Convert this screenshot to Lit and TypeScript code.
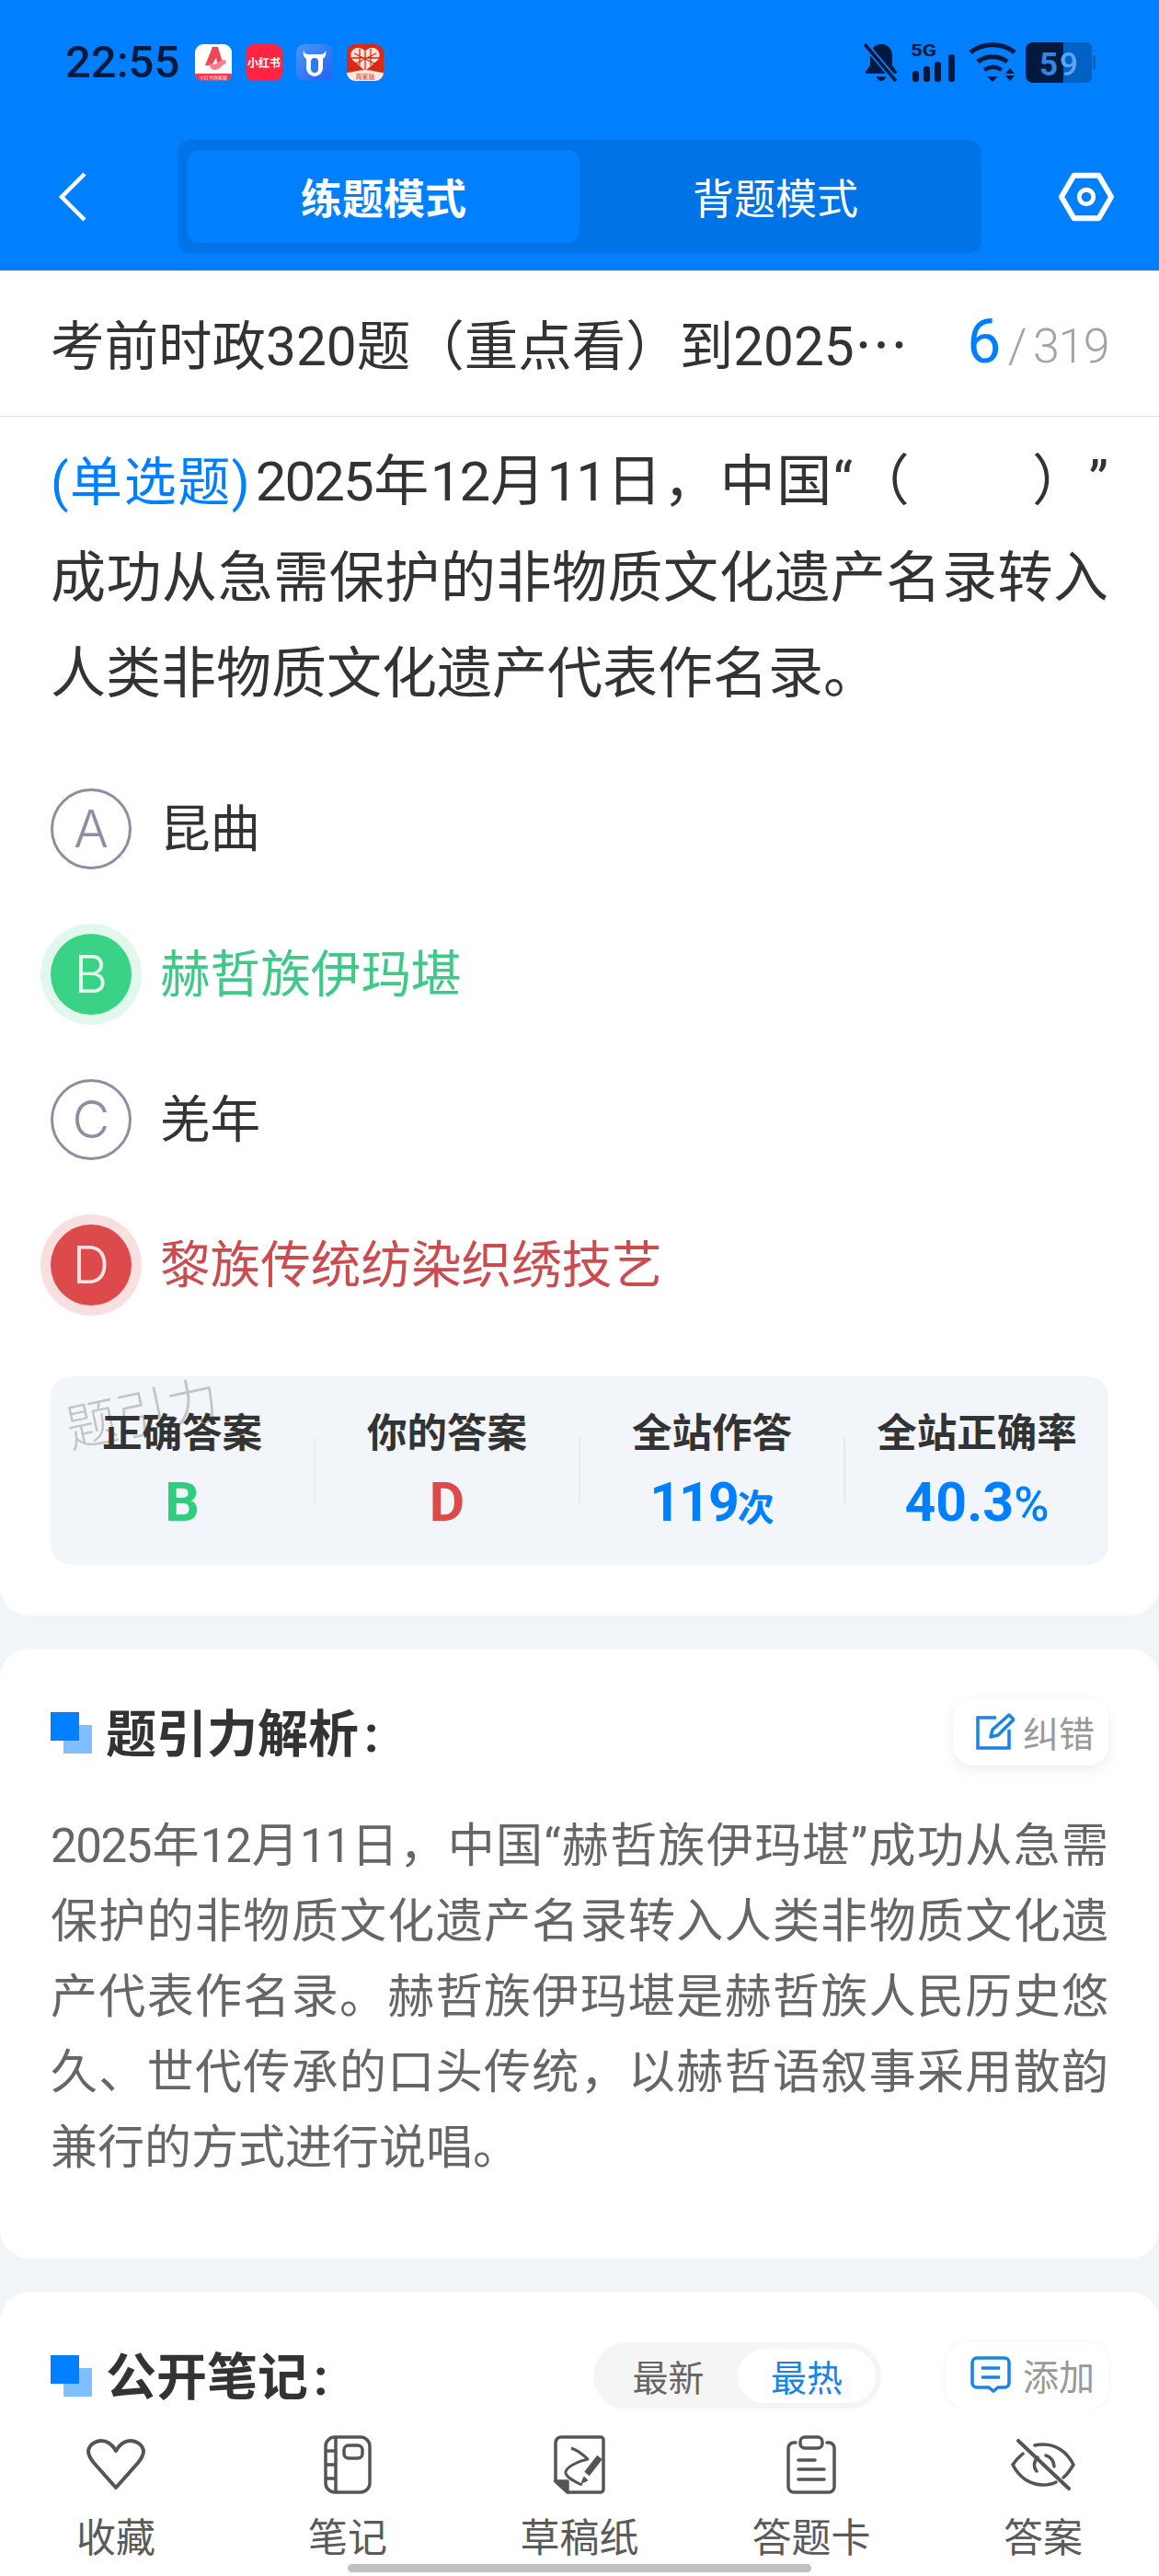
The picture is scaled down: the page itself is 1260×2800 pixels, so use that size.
import { LitElement, css, html, svg } from 'lit';
import { customElement } from 'lit/decorators.js';

const options = [
  { key: 'A', text: '昆曲', state: '' },
  { key: 'B', text: '赫哲族伊玛堪', state: 'right' },
  { key: 'C', text: '羌年', state: '' },
  { key: 'D', text: '黎族传统纺染织绣技艺', state: 'wrong' },
];

const tabIcons = {
  heart: html`<svg width="64" height="56" viewBox="0 0 64 56" fill="none" stroke="#555" stroke-width="4" stroke-linejoin="round"><path d="M32 53 8 26C3 20 2 16 2 13 3 6 10 2 16 2c7 0 12 4 16 11C36 6 41 2 48 2c6 0 13 4 14 11 0 3-1 7-6 13z"/></svg>`,
  note: html`<svg width="52" height="64" viewBox="0 0 52 64" fill="none" stroke="#555" stroke-width="3.5"><rect x="2" y="2" width="48" height="60" rx="10"/><path d="M13 2v60M2 17h11M2 32h11M2 47h11"/><rect x="22" y="11" width="20" height="14" rx="5"/></svg>`,
  draft: html`<svg width="56" height="64" viewBox="0 0 56 64" fill="none" stroke="#555" stroke-width="3.5" stroke-linejoin="round"><path d="M8 2h43a3 3 0 0 1 3 3v54a3 3 0 0 1-3 3H15L2 50V8a6 6 0 0 1 6-6z"/><path d="M2 50h13v12z" fill="#555"/><path d="M19 14c8 3 14 8 18 12-10 2-25 9-24 15 1 5 9 9 18 13" stroke-width="3"/><path d="M50 24 36 42" stroke-width="7"/><path d="M33 46l-2 5 5-2z" fill="#555" stroke-width="2"/></svg>`,
  card: html`<svg width="54" height="64" viewBox="0 0 54 64" fill="none" stroke="#555" stroke-width="3.5" stroke-linecap="round"><path d="M10 8H8a6 6 0 0 0-6 6v42a6 6 0 0 0 6 6h38a6 6 0 0 0 6-6V14a6 6 0 0 0-6-6h-2"/><rect x="15" y="2" width="24" height="12" rx="5"/><path d="M13 27h18M13 37h28M13 48h28"/></svg>`,
  eye: html`<svg width="70" height="56" viewBox="0 0 70 56" fill="none" stroke="#555" stroke-width="3.5" stroke-linecap="round"><path d="M13 16C7 21 4 25 2 28c7 14 19 22 33 22 5 0 10-1 14-3M26 7c3-1 6-1 9-1 14 0 26 8 33 22-3 5-6 10-11 14"/><path d="M29 20c-4 4-5 11-1 15M38 18c5 1 9 6 9 12"/><path d="M8 2l55 52" stroke-width="4"/></svg>`,
};

const tabs = [
  { icon: tabIcons.heart, label: '收藏' },
  { icon: tabIcons.note, label: '笔记' },
  { icon: tabIcons.draft, label: '草稿纸' },
  { icon: tabIcons.card, label: '答题卡' },
  { icon: tabIcons.eye, label: '答案' },
];

const squares = svg`<rect x="14" y="14" width="31" height="31" fill="#80bfff"/><rect width="31" height="31" fill="#0080ff"/>`;

@customElement('app-root')
export class AppRoot extends LitElement {
  static styles = css`
    :host {
      display: block;
      font-family: Roboto, "Noto Sans CJK SC", sans-serif;
      color: #333;
      text-spacing-trim: space-all;
    }
    .page {
      height: 2800px;
      display: flex;
      flex-direction: column;
      background: #f2f5f8;
      overflow: hidden;
    }
    .header {
      background: #0080ff;
      height: 294px;
      flex: none;
    }
    .status {
      height: 136px;
      display: flex;
      align-items: center;
      padding: 0 69px 0 71px;
    }
    .time {
      font-size: 49px;
      font-weight: 500;
      line-height: 50px;
      color: #001a3d;
      width: 141px;
    }
    .apps {
      display: flex;
      gap: 15px;
    }
    .sys {
      margin-left: auto;
      display: flex;
      align-items: center;
      gap: 12px;
    }
    .sys svg {
      overflow: visible;
    }
    .batt {
      margin-left: -5px;
    }
    .nav {
      margin-top: 16px;
      height: 123px;
      display: flex;
      align-items: center;
      padding: 0 49px 0 62px;
    }
    .seg {
      margin-left: 99px;
      width: 874px;
      height: 123px;
      box-sizing: border-box;
      padding: 11px;
      background: #0073e6;
      border-radius: 14px;
      display: flex;
    }
    .seg div {
      flex: 1;
      display: flex;
      align-items: center;
      justify-content: center;
      color: #fff;
      font-size: 45px;
      border-radius: 12px;
    }
    .seg .on {
      flex: none;
      width: 426px;
      background: #0080ff;
      font-weight: 700;
    }
    .hex {
      margin-left: auto;
    }
    .body {
      flex: 1;
      min-height: 0;
      overflow: hidden;
    }
    .card {
      background: #fff;
      border-radius: 32px;
    }
    .quiz {
      border-radius: 0 0 32px 32px;
      padding-bottom: 55px;
    }
    .title {
      height: 159px;
      box-sizing: border-box;
      border-bottom: 1px solid #dcdcdc;
      padding: 0 55px 3px;
      display: flex;
      align-items: center;
      justify-content: space-between;
    }
    .name {
      font-size: 58.5px;
      color: #333;
    }
    .name span {
      font-family: "Noto Sans CJK SC", sans-serif;
    }
    .count {
      display: flex;
      align-items: baseline;
      color: #a3a3a3;
      font-size: 52px;
      font-weight: 300;
      letter-spacing: -1.5px;
    }
    .count b {
      color: #0080ff;
      font-size: 66px;
      font-weight: 400;
      margin-right: 9px;
    }
    .count i {
      font-style: normal;
      margin-right: 8px;
    }
    .question {
      margin: 19px 55px 0;
      font-size: 60px;
      line-height: 104px;
      text-align: justify;
      color: #333;
    }
    .first {
      text-align-last: justify;
    }
    .question .tag {
      color: #0080ff;
      font-size: 57px;
      margin-right: 6px;
    }
    .question .num {
      letter-spacing: -2px;
    }
    .options {
      margin: 72px 55px 0;
      display: flex;
      flex-direction: column;
      gap: 70px;
    }
    .opt {
      display: flex;
      align-items: center;
      gap: 31px;
      font-size: 54.6px;
      line-height: 88px;
    }
    .key {
      width: 88px;
      height: 88px;
      box-sizing: border-box;
      border: 3px solid #8b8fa3;
      border-radius: 50%;
      color: #8b8fa3;
      font-family: Inter, sans-serif;
      font-weight: 300;
      font-size: 56px;
      display: flex;
      align-items: center;
      justify-content: center;
    }
    .right {
      color: #3dc986;
    }
    .right .key {
      background: #3ad386;
      border: none;
      color: #e4fbef;
      box-shadow: 0 0 0 11px #e2f8ec;
    }
    .wrong {
      color: #cc4b4f;
    }
    .wrong .key {
      background: #dc4a4c;
      border: none;
      color: #fbe3e3;
      box-shadow: 0 0 0 11px #f9dfe0;
    }
    .stats {
      position: relative;
      margin: 77px 55px 0;
      height: 205px;
      box-sizing: border-box;
      padding-top: 38px;
      background: #f2f5f9;
      border-radius: 22px;
      display: flex;
      align-items: flex-start;
    }
    .mark {
      position: absolute;
      left: 16px;
      top: 10px;
      font-size: 56px;
      line-height: 64px;
      font-weight: 300;
      color: #c2c4c7;
      transform: rotate(-12deg);
    }
    .cell {
      position: relative;
      flex: 1;
      text-align: center;
    }
    .cell h4 {
      margin: 0;
      font-size: 43.5px;
      line-height: 50px;
      font-weight: 700;
      color: #333;
    }
    .val {
      margin-top: 19px;
      font-size: 59px;
      line-height: 60px;
      font-weight: 700;
      color: #0080ff;
    }
    .val small {
      font-size: 40px;
      font-weight: 700;
    }
    .val small.pct {
      font-size: 52px;
      font-weight: 500;
    }
    .val .tight {
      letter-spacing: -2px;
    }
    .val.g {
      color: #2fce7f;
    }
    .val.r {
      color: #dd4a4a;
    }
    .sep {
      flex: none;
      width: 2px;
      height: 71px;
      margin-top: 29px;
      background: #e7e9ec;
    }
    .block {
      margin-top: 36px;
      padding: 55px 55px 79px;
    }
    .head {
      display: flex;
      align-items: center;
      height: 72px;
    }
    .head h3 {
      margin: 4px 0 0 15px;
      font-size: 55px;
      line-height: 72px;
      font-weight: 700;
      color: #333;
    }
    .head h3 em {
      font-style: normal;
      margin-left: 6px;
    }
    .btn {
      margin-left: auto;
      height: 72px;
      box-sizing: border-box;
      border-radius: 22px;
      background: #fff;
      box-shadow: 0 4px 14px rgba(60, 70, 90, 0.1);
      display: flex;
      align-items: center;
      gap: 9px;
      padding: 0 15px 2px 25px;
      font-size: 39px;
      color: #999;
    }
    .add {
      margin-left: 71px;
      padding-left: 26px;
      gap: 13px;
      box-shadow: 0 1px 8px rgba(60, 70, 90, 0.07);
    }
    .analysis {
      margin-top: 47px;
      font-size: 51px;
      line-height: 82px;
      color: #666;
      text-align: justify;
    }
    .analysis .num {
      letter-spacing: -1.4px;
    }
    .sort {
      margin-left: auto;
      width: 313px;
      height: 73px;
      box-sizing: border-box;
      padding: 7px 6px;
      border-radius: 37px;
      background: #f5f5f5;
      display: flex;
      font-size: 39px;
      color: #666;
    }
    .sort div {
      flex: 1;
      display: flex;
      align-items: center;
      justify-content: center;
      border-radius: 30px;
    }
    .sort .on {
      flex: none;
      width: 150px;
      background: #fff;
      color: #1a82e8;
    }
    .bar {
      flex: none;
      height: 182px;
      background: #fff;
      display: flex;
      flex-direction: column;
      align-items: center;
    }
    .tabs {
      align-self: stretch;
      display: grid;
      grid-template-columns: repeat(5, 1fr);
    }
    .tab {
      display: flex;
      flex-direction: column;
      align-items: center;
      color: #5a5a5a;
      font-size: 43px;
      line-height: 50px;
    }
    .tab .ico {
      height: 64px;
      margin: 29px 0 23px;
      display: flex;
      align-items: center;
    }
    .home {
      margin-top: 3px;
      width: 504px;
      height: 9px;
      border-radius: 5px;
      background: #c0c0c0;
    }
  `;

  renderStatus() {
    return html`
      <div class="status">
        <div class="time">22:55</div>
        <div class="apps">
          <svg width="40" height="40" viewBox="0 0 40 40">
            <rect width="40" height="40" rx="9" fill="#fff"/>
            <path d="M32 40H8a8 8 0 0 1-8-8h40a8 8 0 0 1-8 8z" fill="#ee3a4c"/>
            <path d="M19 3h6l5 17h-6l-1-5-5 8H11z" fill="#f04556"/>
            <path d="M15 20c6 6 12-4 18-3l1 4c-4 0-7 8-13 7-3 0-5-3-6-8z" fill="#f7808c"/>
            <text x="20" y="38" font-size="5" fill="#ffe4e6" text-anchor="middle">小红书商家版</text>
          </svg>
          <svg width="40" height="40" viewBox="0 0 40 40">
            <rect width="40" height="40" rx="9" fill="#ff2442"/>
            <text x="20" y="25" font-size="12" font-weight="700" fill="#fff" text-anchor="middle">小红书</text>
          </svg>
          <svg width="40" height="40" viewBox="0 0 40 40">
            <defs><linearGradient id="bull" x1="0" y1="0" x2="1" y2="1"><stop offset="0" stop-color="#4a96f8"/><stop offset="1" stop-color="#1f62f0"/></linearGradient></defs>
            <rect width="40" height="40" rx="9" fill="url(#bull)"/>
            <path d="M8 7c1 3 3 4 5 4h14c2 0 4-1 5-4 1 4 0 7-3 9v10a9 9 0 0 1-18 0V16c-3-2-4-5-3-9z" fill="#fff"/>
            <rect x="16" y="15" width="8" height="16" rx="4" fill="#2f78f2"/>
          </svg>
          <svg width="40" height="40" viewBox="0 0 40 40">
            <rect width="40" height="40" rx="9" fill="#d92a14"/>
            <path d="M20 29 6 17C2 11 6 4 12 4c4 0 7 2 8 4 1-2 4-4 8-4 6 0 10 7 6 13z" fill="#fbe3dc"/>
            <path d="M8 10l24 12M32 10 8 22M14 5v18M26 5v18M20 8v21M5 15h30" stroke="#d92a14" stroke-width="1.3" fill="none"/>
            <path d="M9 40a9 9 0 0 1-9-9c6 0 12-3 20-3s14 3 20 3a9 9 0 0 1-9 9z" fill="#fde8e2"/>
            <text x="20" y="38" font-size="7" fill="#cf3a20" text-anchor="middle">商家版</text>
          </svg>
        </div>
        <div class="sys">
          <svg width="40" height="44" viewBox="0 0 40 44">
            <path d="M20 2C12 2 8 8 8 15v10l-5 7v2h34v-2l-5-7V15C32 8 28 2 20 2z" fill="#001a3d"/>
            <path d="M15 37a5 5 0 0 0 10 0z" fill="#001a3d"/>
            <path d="M2 2l36 42" stroke="#0080ff" stroke-width="7"/>
            <path d="M2 2l34 40" stroke="#001a3d" stroke-width="3.5"/>
          </svg>
          <svg width="50" height="44" viewBox="0 0 50 44" fill="#001a3d">
            <text x="0" y="15" font-size="19" font-weight="700" textLength="28" lengthAdjust="spacingAndGlyphs">5G</text>
            <rect x="2" y="31" width="7" height="12" rx="3"/>
            <rect x="14" y="26" width="7" height="17" rx="3"/>
            <rect x="26" y="21" width="7" height="22" rx="3"/>
            <rect x="41" y="13" width="7" height="30" rx="3"/>
          </svg>
          <svg width="56" height="44" viewBox="0 0 56 44" fill="none" stroke="#001a3d" stroke-width="5">
            <path d="M3 11C16 0 38 0 51 11"/>
            <path d="M11 21c9-7 23-7 32 0"/>
            <path d="M18 30c6-4 13-4 19 0" stroke-width="4.5"/>
            <path d="M21 37h12l-6 6z" fill="#001a3d" stroke="none"/>
            <path d="M46 28l5 6H41zM41 36h10l-5 6z" fill="#001a3d" stroke="none"/>
          </svg>
          <svg class="batt" width="76" height="44" viewBox="0 0 76 44">
            <path d="M41 0h25a6 6 0 0 1 6 6v32a6 6 0 0 1-6 6H41z" fill="#0062c4"/>
            <path d="M73 14h1a2 2 0 0 1 2 2v12a2 2 0 0 1-2 2h-1z" fill="#0062c4"/>
            <path d="M8 0h33v44H8a8 8 0 0 1-8-8V8a8 8 0 0 1 8-8z" fill="#001a3d"/>
            <text x="15" y="36" font-size="35" font-weight="700" fill="#2f86e8">5</text>
            <text x="37" y="36" font-size="35" font-weight="500" fill="#5ca6fa">9</text>
          </svg>
        </div>
      </div>
    `;
  }

  renderSquares() {
    return html`<svg width="45" height="45" viewBox="0 0 45 45">${squares}</svg>`;
  }

  render() {
    return html`
      <div class="page" lang="zh-CN">
        <div class="header">
          ${this.renderStatus()}
          <div class="nav">
            <svg width="32" height="54" viewBox="0 0 32 54" fill="none" stroke="#fff" stroke-width="4.5"><path d="M30 2 5 27l25 25"/></svg>
            <div class="seg">
              <div class="on">练题模式</div>
              <div>背题模式</div>
            </div>
            <svg class="hex" width="60" height="56" viewBox="0 0 62 56" fill="none" stroke="#fff" stroke-width="6" stroke-linejoin="round"><path d="M17 4h28l14 24-14 24H17L3 28z"/><circle cx="31" cy="28" r="8" stroke-width="5"/></svg>
          </div>
        </div>
        <div class="body">
          <div class="card quiz">
            <div class="title">
              <div class="name">考前时政320题（重点看）到2025<span>…</span></div>
              <div class="count"><b>6</b><i>/</i>319</div>
            </div>
            <div class="question">
              <div class="first"><span class="tag">(单选题)</span><span class="num">2025</span>年<span class="num">12</span>月<span class="num">11</span>日，中国“（\u00a0\u00a0\u00a0\u00a0\u00a0\u00a0\u00a0\u00a0）”</div>
              <div>成功从急需保护的非物质文化遗产名录转入人类非物质文化遗产代表作名录。</div>
            </div>
            <div class="options">
              ${options.map(o => html`
                <div class="opt ${o.state}">
                  <div class="key">${o.key}</div>
                  <div>${o.text}</div>
                </div>
              `)}
            </div>
            <div class="stats">
              <div class="mark">题引力</div>
              <div class="cell"><h4>正确答案</h4><div class="val g">B</div></div>
              <div class="sep"></div>
              <div class="cell"><h4>你的答案</h4><div class="val r">D</div></div>
              <div class="sep"></div>
              <div class="cell"><h4>全站作答</h4><div class="val"><span class="tight">119</span><small>次</small></div></div>
              <div class="sep"></div>
              <div class="cell"><h4>全站正确率</h4><div class="val">40.3<small class="pct">%</small></div></div>
            </div>
          </div>
          <div class="card block">
            <div class="head">
              ${this.renderSquares()}
              <h3>题引力解析<em>:</em></h3>
              <div class="btn">
                <svg width="42" height="40" viewBox="0 0 42 40" fill="none" stroke="#1a82e8" stroke-width="3.5"><path d="M22 5H2v33h34V18"/><path d="M36 2l5 5-17 17-8 2 2-8z" stroke-linejoin="round"/></svg>
                纠错
              </div>
            </div>
            <div class="analysis">
              <div class="first"><span class="num">2025</span>年<span class="num">12</span>月<span class="num">11</span>日，中国“赫哲族伊玛堪”成功从急需</div>
              <div>保护的非物质文化遗产名录转入人类非物质文化遗产代表作名录。赫哲族伊玛堪是赫哲族人民历史悠久、世代传承的口头传统，以赫哲语叙事采用散韵兼行的方式进行说唱。</div>
            </div>
          </div>
          <div class="card block">
            <div class="head">
              ${this.renderSquares()}
              <h3>公开笔记<em>:</em></h3>
              <div class="sort">
                <div>最新</div>
                <div class="on">最热</div>
              </div>
              <div class="btn add">
                <svg width="44" height="40" viewBox="0 0 44 40" fill="none" stroke="#1a82e8" stroke-width="3.5"><path d="M7 2h30a5 5 0 0 1 5 5v22a5 5 0 0 1-5 5h-7l-5 4-5-4H7a5 5 0 0 1-5-5V7a5 5 0 0 1 5-5z"/><path d="M12 13h20M12 23h20"/></svg>
                添加
              </div>
            </div>
          </div>
        </div>
        <div class="bar">
          <div class="tabs">
            ${tabs.map(t => html`
              <div class="tab">
                <div class="ico">${t.icon}</div>
                ${t.label}
              </div>
            `)}
          </div>
          <div class="home"></div>
        </div>
      </div>
    `;
  }
}
